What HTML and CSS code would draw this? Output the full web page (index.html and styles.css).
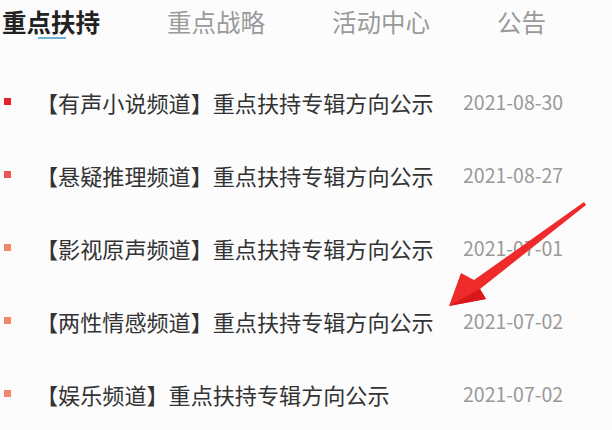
FILE: index.html
```html
<!DOCTYPE html>
<html lang="zh-CN">
<head>
    <meta charset="UTF-8">
    <meta name="viewport" content="width=device-width, initial-scale=1.0">
    <title>重点扶持</title>
    <link rel="stylesheet" href="styles.css">
</head>
<body>
    <nav class="tabs">
        <a class="tab active">重点扶持</a>
        <a class="tab">重点战略</a>
        <a class="tab">活动中心</a>
        <a class="tab">公告</a>
    </nav>
    <ul class="notice-list">
        <li class="notice">
            <span class="dot dot-1"></span>
            <span class="notice-title">【有声小说频道】重点扶持专辑方向公示</span>
            <span class="notice-date">2021-08-30</span>
        </li>
        <li class="notice">
            <span class="dot dot-2"></span>
            <span class="notice-title">【悬疑推理频道】重点扶持专辑方向公示</span>
            <span class="notice-date">2021-08-27</span>
        </li>
        <li class="notice">
            <span class="dot"></span>
            <span class="notice-title">【影视原声频道】重点扶持专辑方向公示</span>
            <span class="notice-date">2021-07-01</span>
        </li>
        <li class="notice">
            <span class="dot"></span>
            <span class="notice-title">【两性情感频道】重点扶持专辑方向公示</span>
            <span class="notice-date">2021-07-02</span>
        </li>
        <li class="notice">
            <span class="dot"></span>
            <span class="notice-title">【娱乐频道】重点扶持专辑方向公示</span>
            <span class="notice-date">2021-07-02</span>
        </li>
    </ul>
    <!-- annotation arrow drawn over the list -->
    <svg class="arrow" width="612" height="430" viewBox="0 0 612 430">
        <polygon points="449,306 461,273 474,280 584,202 586,205 480,289 486,299" fill="#ee2a2a"/>
        <polygon points="449,306 480,289 486,299" fill="#d9181c"/>
    </svg>
</body>
</html>
```

FILE: styles.css
```css
body {
    margin: 0;
    padding: 0;
    background-color: #fcfcfd;
    font-family: "Noto Sans CJK SC", "Noto Sans", sans-serif;
    position: relative;
    width: 612px;
    height: 430px;
    overflow: hidden;
}
.tabs {
    display: flex;
    gap: 67px;
    padding: 4px 0 0 2px;
    height: 44px;
}
.tab {
    position: relative;
    font-size: 24.5px;
    line-height: 36px;
    color: #9a9a9a;
}
.tab.active {
    color: #222;
    font-weight: bold;
}
.tab.active::after {
    content: "";
    position: absolute;
    left: 36px;
    top: 33px;
    width: 28px;
    height: 2px;
    background-color: #6ab4dc;
}
.notice-list {
    list-style: none;
    margin: 0;
    padding: 17px 0 0 0;
}
.notice {
    display: flex;
    align-items: center;
    height: 73px;
}
.dot {
    width: 7px;
    height: 7px;
    margin-left: 4px;
    background-color: #f0866a;
}
.dot-1 {
    background-color: #e8202a;
}
.dot-2 {
    background-color: #ee5656;
}
.notice-title {
    width: 417px;
    margin-left: 25px;
    font-size: 22.1px;
    color: #333;
    white-space: nowrap;
}
.notice-date {
    margin-left: 10px;
    font-size: 19.5px;
    color: #999;
}
.arrow {
    position: absolute;
    left: 0;
    top: 0;
}
```
